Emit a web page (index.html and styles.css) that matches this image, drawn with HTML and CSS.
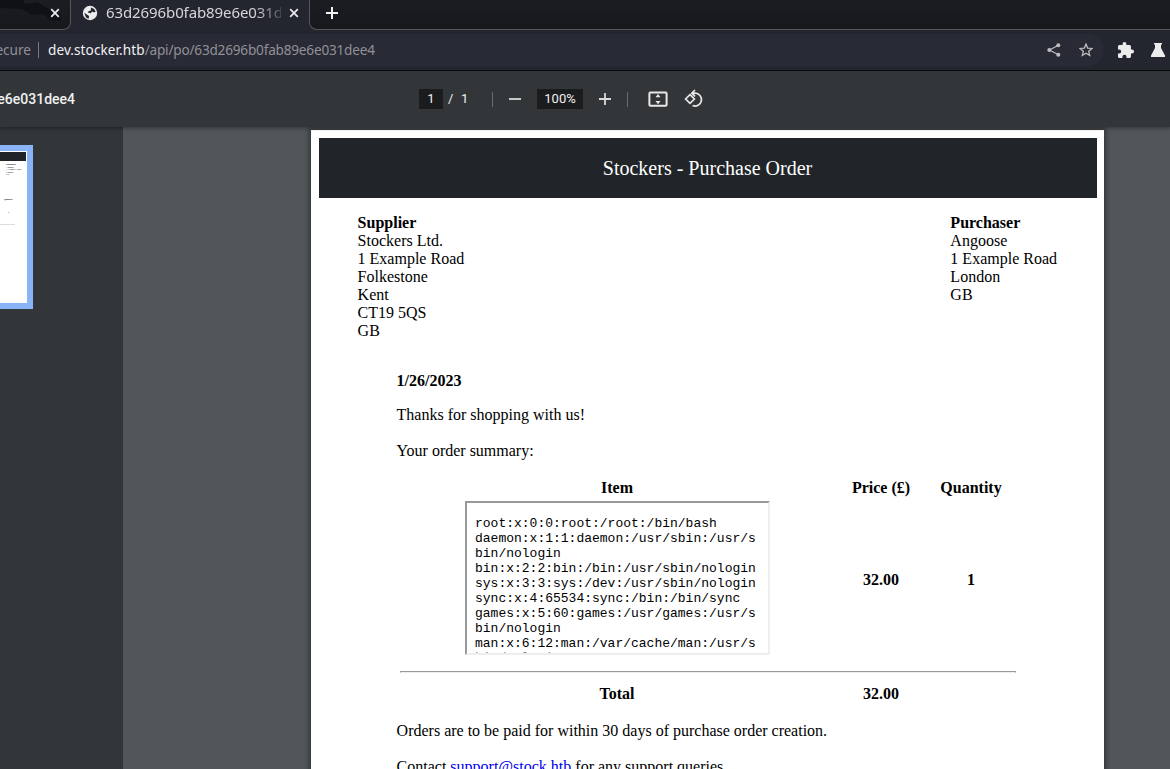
FILE: index.html
```html
<!DOCTYPE html>
<html lang="en">
<head>
<meta charset="utf-8">
<title>Purchase Order</title>
<link rel="stylesheet" href="styles.css">
</head>
<body>
<div class="window">
  <header class="tabs">
    <div class="tab tab-previous">
      <svg class="dragon" width="66" height="24" viewBox="0 0 66 24"><path d="M0 0h23l2 4 12-2 10 6 8 4 6 3-1 3 2 3-12-1-7-6-11 1-10-6-22-1z"/></svg>
      <svg class="close" width="10" height="10" viewBox="0 0 10 10"><path d="M1.2 1.2l7.6 7.6M8.8 1.2l-7.6 7.6"/></svg>
    </div>
    <div class="tab tab-active">
      <svg class="globe" width="16" height="16" viewBox="0 0 16 16"><circle cx="8" cy="8" r="7.2"/><path d="M2.200 7.800l4.800 3.200-.3 2.800-2.700-1.200zM9 2.400l3.200 1.500 1.500 3.200-2.300.2-1.200-.8-1.500 1.700-2.500-.4.300-1.700 2.200-.4z"/></svg>
      <span class="tab-title">63d2696b0fab89e6e031d</span>
      <svg class="close" width="10" height="10" viewBox="0 0 10 10"><path d="M1.2 1.2l7.6 7.6M8.8 1.2l-7.6 7.6"/></svg>
    </div>
    <div class="tab-strip">
      <svg class="new-tab" width="12" height="12" viewBox="0 0 12 12"><path d="M0 6h12M6 0v12"/></svg>
    </div>
  </header>
  <div class="navigation">
    <div class="omnibox">
      <span class="secure">ecure</span><span class="omni-rule"></span>
      <span class="url"><b>dev.stocker.htb</b>/api/po/63d2696b0fab89e6e031dee4</span>
      <svg class="share" width="14" height="14" viewBox="0 0 14 14"><path d="M11 2.5L2.5 7l8.5 4.5"/><circle cx="2.3" cy="7" r="2"/><circle cx="11.3" cy="2.3" r="2"/><circle cx="11.3" cy="11.7" r="2"/></svg>
      <svg class="star" width="14" height="14" viewBox="0 0 14 14"><path d="M7 1.1l1.65 4 4.35.35-3.3 2.85 1 4.2L7 10.25 3.3 12.5l1-4.2L1 5.45l4.350-.35z"/></svg>
    </div>
    <svg class="puzzle" width="16" height="16" viewBox="2 1 21 21"><path d="M20.5 11H19V7c0-1.100-.9-2-2-2h-4V3.500a2.500 2.500 0 0 0-5 0V5H4c-1.100 0-2 .9-2 2v3.800h1.500a2.700 2.700 0 0 1 0 5.400H2V20c0 1.100.9 2 2 2h3.800v-1.500a2.700 2.700 0 0 1 5.400 0V22H17c1.100 0 2-.9 2-2v-4h1.500a2.500 2.500 0 0 0 0-5z"/></svg>
    <svg class="flask" width="14" height="14" viewBox="0 0 14 14"><path d="M3 0h8v1.500h-1V5l4 7.500V14H0v-1.500L4 5V1.500H3z"/></svg>
  </div>
  <div class="toolbar">
    <div class="file-name">e6e031dee4</div>
    <div class="controls">
      <span class="field page-field">1</span><span class="slash">/</span><span class="count">1</span>
      <i class="rule rule-left"></i>
      <svg class="minus" width="12" height="12" viewBox="0 0 12 12"><path d="M0 6h12"/></svg>
      <span class="field zoom-field">100%</span>
      <svg class="plus" width="12" height="12" viewBox="0 0 12 12"><path d="M0 6h12M6 0v12"/></svg>
      <i class="rule rule-right"></i>
      <svg class="fit" width="20" height="16" viewBox="0 0 20 16"><rect x="1.400" y="1.400" width="17.200" height="13.400" rx="1"/><path d="M7.500 6.200L10 3 12.500 6.200zM7.500 10L10 13.200 12.500 10z"/></svg>
      <svg class="rotate" width="20" height="20" viewBox="0 0 20 20"><path d="M6 5.600L10.400 10 6 14.400 1.600 10z"/><path d="M8.300 4.200H11a6.400 6.400 0 1 1-2.400 12.300M11 1L7.800 4.200 11 7.400"/></svg>
    </div>
  </div>
  <main class="viewer">
    <aside class="sidebar">
      <div class="thumbnail">
        <div class="mini-page">
          <div class="mini-header"></div>
          <div class="mini-address"><b>Purchaser</b><br>Angoose<br>1 Example Road<br>London<br>GB</div>
          <div class="mini-heads"><b>Quantity</b></div>
          <div class="mini-quantity"><b>1</b></div>
          <div class="mini-rule"></div>
        </div>
      </div>
    </aside>
    <div class="canvas">
      <article class="page">
        <h1 class="title">Stockers - Purchase Order</h1>
        <section class="parties">
          <address><b>Supplier</b><br>Stockers Ltd.<br>1 Example Road<br>Folkestone<br>Kent<br>CT19 5QS<br>GB</address>
          <address><b>Purchaser</b><br>Angoose<br>1 Example Road<br>London<br>GB</address>
        </section>
        <section class="order">
          <p class="date">1/26/2023</p>
          <p class="thanks">Thanks for shopping with us!</p>
          <p class="summary">Your order summary:</p>
          <div class="items heading"><span>Item</span><span>Price (£)</span><span>Quantity</span></div>
          <div class="items product">
            <pre class="frame">root:x:0:0:root:/root:/bin/bash
daemon:x:1:1:daemon:/usr/sbin:/usr/s
bin/nologin
bin:x:2:2:bin:/bin:/usr/sbin/nologin
sys:x:3:3:sys:/dev:/usr/sbin/nologin
sync:x:4:65534:sync:/bin:/bin/sync
games:x:5:60:games:/usr/games:/usr/s
bin/nologin
man:x:6:12:man:/var/cache/man:/usr/s<span class="clipped-line">bin/nologin</span></pre>
            <span class="cell">32.00</span><span class="cell">1</span>
          </div>
          <hr class="divider">
          <div class="items total"><span>Total</span><span>32.00</span><span></span></div>
          <p class="terms">Orders are to be paid for within 30 days of purchase order creation.</p>
          <p class="contact">Contact <a href="#">support@stock.htb</a> for any support queries.</p>
        </section>
      </article>
    </div>
  </main>
</div>
</body>
</html>
```

FILE: styles.css
```css
* { box-sizing: border-box; }
body { margin: 0; overflow: hidden; }
svg { display: block; flex: none; fill: none; }
.window { display: flex; flex-direction: column; width: 1170px; height: 769px; overflow: hidden; background: #525659; }

.tabs { display: flex; flex: none; height: 30px; background: #23252f; font-family: "Noto Sans", sans-serif; }
.tab { position: relative; height: 30px; }
.tab-previous { width: 71px; padding: 8px 0 0 50px; background: linear-gradient(#1c1d23, #17181c); border: solid #55565b; border-width: 0 1px 1px 0; border-bottom-right-radius: 8px; }
.dragon { position: absolute; left: 0; top: 0; fill: #101115; }
.tab-previous .close { position: relative; }
.close { stroke: #e8e8e9; stroke-width: 1.8; }
.tab-active { display: flex; width: 238px; padding: 5px 0 0 11px; }
.globe { fill: #ececed; }
.globe path { fill: #23252f; }
.tab-title { width: 175px; margin: -4px 8px 0 8px; color: #d7d7da; font-size: 15px; letter-spacing: -.1px; line-height: 22px; white-space: nowrap; -webkit-mask-image: linear-gradient(to right, #000 148px, transparent 183px); mask-image: linear-gradient(to right, #000 148px, transparent 183px); }
.tab-active .close { margin-top: 3px; }
.tab-strip { flex: 1; padding: 7px 0 0 16px; background: linear-gradient(#1c1d23, #17181c); border: solid #55565b; border-width: 0 0 1px 1px; border-bottom-left-radius: 8px; }
.new-tab { stroke: #f2f2f2; stroke-width: 2; }

.navigation { position: relative; z-index: 1; display: flex; flex: none; align-items: center; height: 41px; padding-bottom: 1px; background: #23252f; border-bottom: 1px solid #08090b; font-family: "Noto Sans", sans-serif; }
.omnibox { display: flex; align-items: center; width: 1104px; height: 32px; background: #282a35; border-radius: 0 16px 16px 0; color: #909197; font-size: 13.6px; line-height: 20px; }
.secure { display: flex; flex: none; justify-content: flex-end; width: 31px; white-space: nowrap; }
.omni-rule { width: 1px; height: 16px; margin: 0 9px 0 7px; background: #777981; }
.url { width: 999px; letter-spacing: -.2px; white-space: nowrap; }
.url b { color: #f0f0f1; font-weight: 400; letter-spacing: .07px; }
.share { fill: #bdbdbf; stroke: #bdbdbf; stroke-width: 1.2; }
.share path { fill: none; }
.share circle { stroke: none; }
.star { margin-left: 18px; stroke: #bdbdbf; stroke-width: 1.3; }
.puzzle { margin-left: 14px; fill: #ececed; }
.flask { margin-left: 17px; fill: #ececed; }

.toolbar { position: relative; display: flex; flex: none; align-items: center; height: 56px; background: #323639; box-shadow: 0 0 4px 1px rgba(0, 0, 0, .4); color: #f1f1f1; font-family: Roboto, sans-serif; font-size: 13px; line-height: 20px; }
.file-name { display: flex; flex: none; justify-content: flex-end; width: 75px; font-size: 14px; font-weight: 500; white-space: nowrap; }
.controls { display: flex; align-items: center; margin-left: 344px; }
.field { height: 20px; background: #1b1c1e; text-align: center; }
.page-field { width: 24px; }
.slash { width: 4px; margin: 0 9px 0 5px; }
.count { width: 7px; }
.rule { width: 1px; height: 15px; background: #696c6e; }
.rule-left { margin: 0 16px 0 24px; }
.minus, .plus { stroke: #d9dadb; stroke-width: 1.8; }
.zoom-field { width: 46px; margin: 0 16px; }
.rule-right { margin: 0 20px 0 16px; }
.fit { stroke: #e8e8e9; stroke-width: 2; }
.fit path { fill: #e8e8e9; stroke: none; }
.rotate { margin-left: 16px; stroke: #e8e8e9; stroke-width: 1.7; }

.viewer { display: flex; flex: 1; min-height: 0; }
.sidebar { flex: none; width: 123px; padding-top: 18px; background: #323639; }
.thumbnail { width: 33px; height: 164px; padding: 6px 6px 6px 0; background: #8ab4f8; }
.mini-page { height: 152px; padding-top: 1px; overflow: hidden; background: #fff; color: #000; font: 2.3px/2.5px "Liberation Serif", serif; }
.mini-header { width: 26px; height: 9px; background: #212529; }
.mini-address { height: 37px; padding: 2px 0 0 6px; white-space: nowrap; }
.mini-heads { height: 13px; padding-left: 4px; }
.mini-quantity { height: 13px; padding-left: 8px; }
.mini-rule { width: 15px; height: 1px; background: #ddd; }
.canvas { flex: 1; padding: 3px 66px 0 188px; }
.page { width: 793px; height: 900px; padding: 8px 7px 0 8px; background: #fff; box-shadow: 0 0 5px 2px rgba(0, 0, 0, .4); color: #000; font: 16px/18px "Liberation Serif", serif; }
.title { height: 60px; margin: 0; padding-right: 1px; background: #212529; color: #fff; font-size: 20px; font-weight: 400; line-height: 61px; text-align: center; }
.parties { display: flex; justify-content: space-between; height: 142px; padding: 16px 40px 0 38.6px; }
address { font-style: normal; }
.order { padding: 32px 78px 0 77.6px; }
.order p { margin: 0; white-space: nowrap; }
.date { height: 34px; font-weight: 700; }
.thanks { height: 36px; }
.summary { height: 37px; }
.items { display: grid; grid-template-columns: 434px 94px 86px; align-items: center; padding-left: 3.4px; font-weight: 700; text-align: center; }
.heading { height: 22px; align-items: start; }
.product { height: 154px; }
.cell { padding-top: 4px; }
.frame { justify-self: center; width: 305px; height: 154px; margin: 0 0 0 1px; padding: 13px 8px 0; overflow: hidden; border: 2px solid; border-color: #97999b #eee #eee #97999b; font: 13px/15px "Liberation Mono", monospace; text-align: left; }
.clipped-line { display: block; margin-top: -1px; color: #888; }
.divider { width: 616px; height: 2px; margin: 16px 0 12px 3.4px; border: 1px solid; border-color: #999 #999 #eee #999; }
.total { height: 18px; }
.order .terms { margin-top: 19px; height: 36px; }
.contact a { color: #00e; }
```
